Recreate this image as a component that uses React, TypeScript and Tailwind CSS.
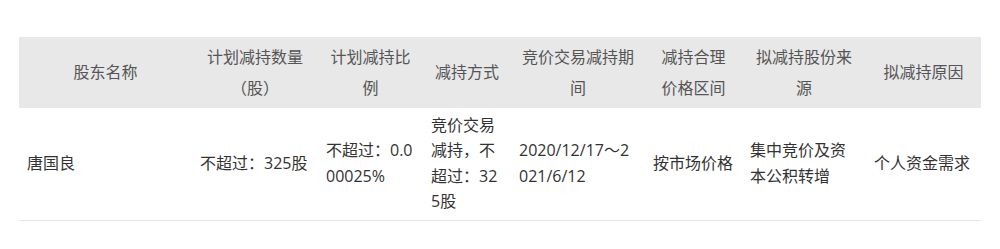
import React from "react";

const cols = [173, 126, 105, 88, 134, 97, 124, 115];

const headers: React.ReactNode[] = [
  "股东名称",
  "计划减持数量（股）",
  "计划减持比例",
  "减持方式",
  "竞价交易减持期间",
  "减持合理价格区间",
  "拟减持股份来源",
  "拟减持原因",
];

const body = [
  "唐国良",
  "不超过：325股",
  "不超过：0.000025%",
  "竞价交易减持，不超过：325股",
  "2020/12/17～2021/6/12",
  "按市场价格",
  "集中竞价及资本公积转增",
  "个人资金需求",
];

export default function App() {
  return (
    <div
      className="w-[1000px] h-[249px] bg-white pt-[37px] pl-[19px]"
      style={{ fontFamily: '"Open Sans", "Noto Sans CJK SC", sans-serif' }}
    >
      <table className="table-fixed border-collapse w-[962px]">
        <colgroup>
          {cols.map((w, i) => (
            <col key={i} style={{ width: w }} />
          ))}
        </colgroup>
        <thead>
          <tr className="bg-[#e8e8e8] h-[71px]">
            {headers.map((h, i) => (
              <th
                key={i}
                className="px-[10px] text-center align-middle font-normal text-[16px] leading-[31px] text-[#555555] break-all"
              >
                {h}
              </th>
            ))}
          </tr>
        </thead>
        <tbody>
          <tr className="h-[112px] border-b border-[#e3e3e3]">
            {body.map((b, i) => (
              <td
                key={i}
                className="px-2 text-left align-middle text-[16px] leading-[25.5px] text-[#333333] break-all"
              >
                {b}
              </td>
            ))}
          </tr>
        </tbody>
      </table>
    </div>
  );
}
